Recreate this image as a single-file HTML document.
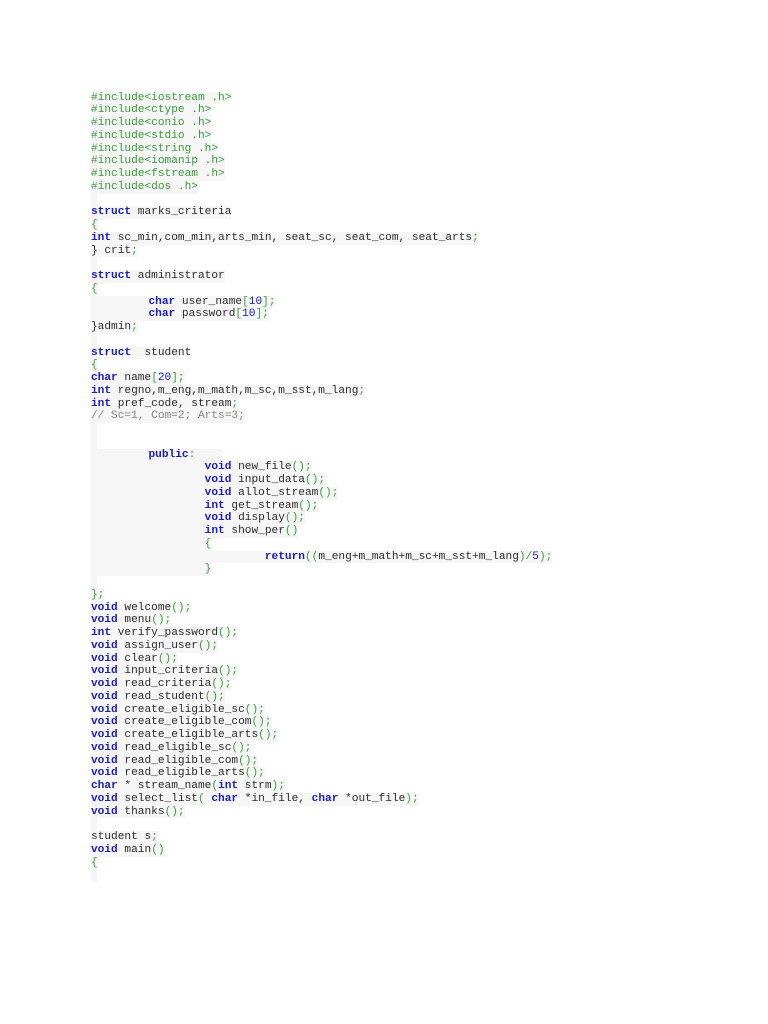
<!DOCTYPE html>
<html><head><meta charset="utf-8"><style>
body{margin:0;background:#fff;width:768px;height:1024px;overflow:hidden}
#c{position:absolute;left:91px;top:91.5px;font-family:"Liberation Mono",monospace;font-size:11.15px;line-height:12.75px;color:#2a2a2a}
.l{height:12.75px;white-space:pre}
.l>span.b{background:#f6f6f6;display:inline-block;min-width:6px;height:12.75px}
.k{color:#1c1cb8;font-weight:bold}
.g{color:#3a9a3a}
.p{color:#3aa03a}
.n{color:#1c1cb8}
.c{color:#888}
.i{padding-left:4px}
</style></head><body><div id="c"><div class="l"><span class="b g">#include&lt;iostream .h&gt;</span></div><div class="l"><span class="b g">#include&lt;ctype .h&gt;</span></div><div class="l"><span class="b g">#include&lt;conio .h&gt;</span></div><div class="l"><span class="b g">#include&lt;stdio .h&gt;</span></div><div class="l"><span class="b g">#include&lt;string .h&gt;</span></div><div class="l"><span class="b g">#include&lt;iomanip .h&gt;</span></div><div class="l"><span class="b g">#include&lt;fstream .h&gt;</span></div><div class="l"><span class="b g">#include&lt;dos .h&gt;</span></div><div class="l"><span class="b"></span></div><div class="l"><span class="b"><span class="k">struct</span> marks_criteria</span></div><div class="l"><span class="b p">{</span></div><div class="l"><span class="b"><span class="k">int</span> sc_min,com_min,arts_min, seat_sc, seat_com, seat_arts<span class="p">;</span></span></div><div class="l"><span class="b">} crit<span class="p">;</span></span></div><div class="l"><span class="b"></span></div><div class="l"><span class="b"><span class="k">struct</span> administrator</span></div><div class="l"><span class="b p">{</span></div><div class="l"><span class="b i">        <span class="k">char</span> user_name<span class="p">[</span><span class="n">10</span><span class="p">];</span></span></div><div class="l"><span class="b i">        <span class="k">char</span> password<span class="p">[</span><span class="n">10</span><span class="p">];</span></span></div><div class="l"><span class="b">}admin<span class="p">;</span></span></div><div class="l"><span class="b"></span></div><div class="l"><span class="b"><span class="k">struct</span>  student</span></div><div class="l"><span class="b p">{</span></div><div class="l"><span class="b"><span class="k">char</span> name<span class="p">[</span><span class="n">20</span><span class="p">];</span></span></div><div class="l"><span class="b"><span class="k">int</span> regno,m_eng,m_math,m_sc,m_sst,m_lang<span class="p">;</span></span></div><div class="l"><span class="b"><span class="k">int</span> pref_code, stream<span class="p">;</span></span></div><div class="l"><span class="b c">// Sc=1, Com=2; Arts=3;</span></div><div class="l"><span class="b"></span></div><div class="l"><span class="b"></span></div><div class="l"><span class="b i">        <span class="k">public</span><span class="p">:</span>    </span></div><div class="l"><span class="b">                 <span class="k">void</span> new_file<span class="p">();</span></span></div><div class="l"><span class="b">                 <span class="k">void</span> input_data<span class="p">();</span></span></div><div class="l"><span class="b">                 <span class="k">void</span> allot_stream<span class="p">();</span></span></div><div class="l"><span class="b">                 <span class="k">int</span> get_stream<span class="p">();</span></span></div><div class="l"><span class="b">                 <span class="k">void</span> display<span class="p">();</span></span></div><div class="l"><span class="b">                 <span class="k">int</span> show_per<span class="p">()</span></span></div><div class="l"><span class="b">                 <span class="p">{</span></span></div><div class="l"><span class="b">                          <span class="k">return</span><span class="p">((</span>m_eng+m_math+m_sc+m_sst+m_lang<span class="p">)/</span><span class="n">5</span><span class="p">);</span></span></div><div class="l"><span class="b">                 <span class="p">}</span></span></div><div class="l"><span class="b"></span></div><div class="l"><span class="b p">};</span></div><div class="l"><span class="b"><span class="k">void</span> welcome<span class="p">();</span></span></div><div class="l"><span class="b"><span class="k">void</span> menu<span class="p">();</span></span></div><div class="l"><span class="b"><span class="k">int</span> verify_password<span class="p">();</span></span></div><div class="l"><span class="b"><span class="k">void</span> assign_user<span class="p">();</span></span></div><div class="l"><span class="b"><span class="k">void</span> clear<span class="p">();</span></span></div><div class="l"><span class="b"><span class="k">void</span> input_criteria<span class="p">();</span></span></div><div class="l"><span class="b"><span class="k">void</span> read_criteria<span class="p">();</span></span></div><div class="l"><span class="b"><span class="k">void</span> read_student<span class="p">();</span></span></div><div class="l"><span class="b"><span class="k">void</span> create_eligible_sc<span class="p">();</span></span></div><div class="l"><span class="b"><span class="k">void</span> create_eligible_com<span class="p">();</span></span></div><div class="l"><span class="b"><span class="k">void</span> create_eligible_arts<span class="p">();</span></span></div><div class="l"><span class="b"><span class="k">void</span> read_eligible_sc<span class="p">();</span></span></div><div class="l"><span class="b"><span class="k">void</span> read_eligible_com<span class="p">();</span></span></div><div class="l"><span class="b"><span class="k">void</span> read_eligible_arts<span class="p">();</span></span></div><div class="l"><span class="b"><span class="k">char</span> * stream_name<span class="p">(</span><span class="k">int</span> strm<span class="p">);</span></span></div><div class="l"><span class="b"><span class="k">void</span> select_list<span class="p">(</span> <span class="k">char</span> *in_file, <span class="k">char</span> *out_file<span class="p">);</span></span></div><div class="l"><span class="b"><span class="k">void</span> thanks<span class="p">();</span></span></div><div class="l"><span class="b"></span></div><div class="l"><span class="b">student s<span class="p">;</span></span></div><div class="l"><span class="b"><span class="k">void</span> main<span class="p">()</span></span></div><div class="l"><span class="b p">{</span></div><div class="l"><span class="b"></span></div></div></body></html>
